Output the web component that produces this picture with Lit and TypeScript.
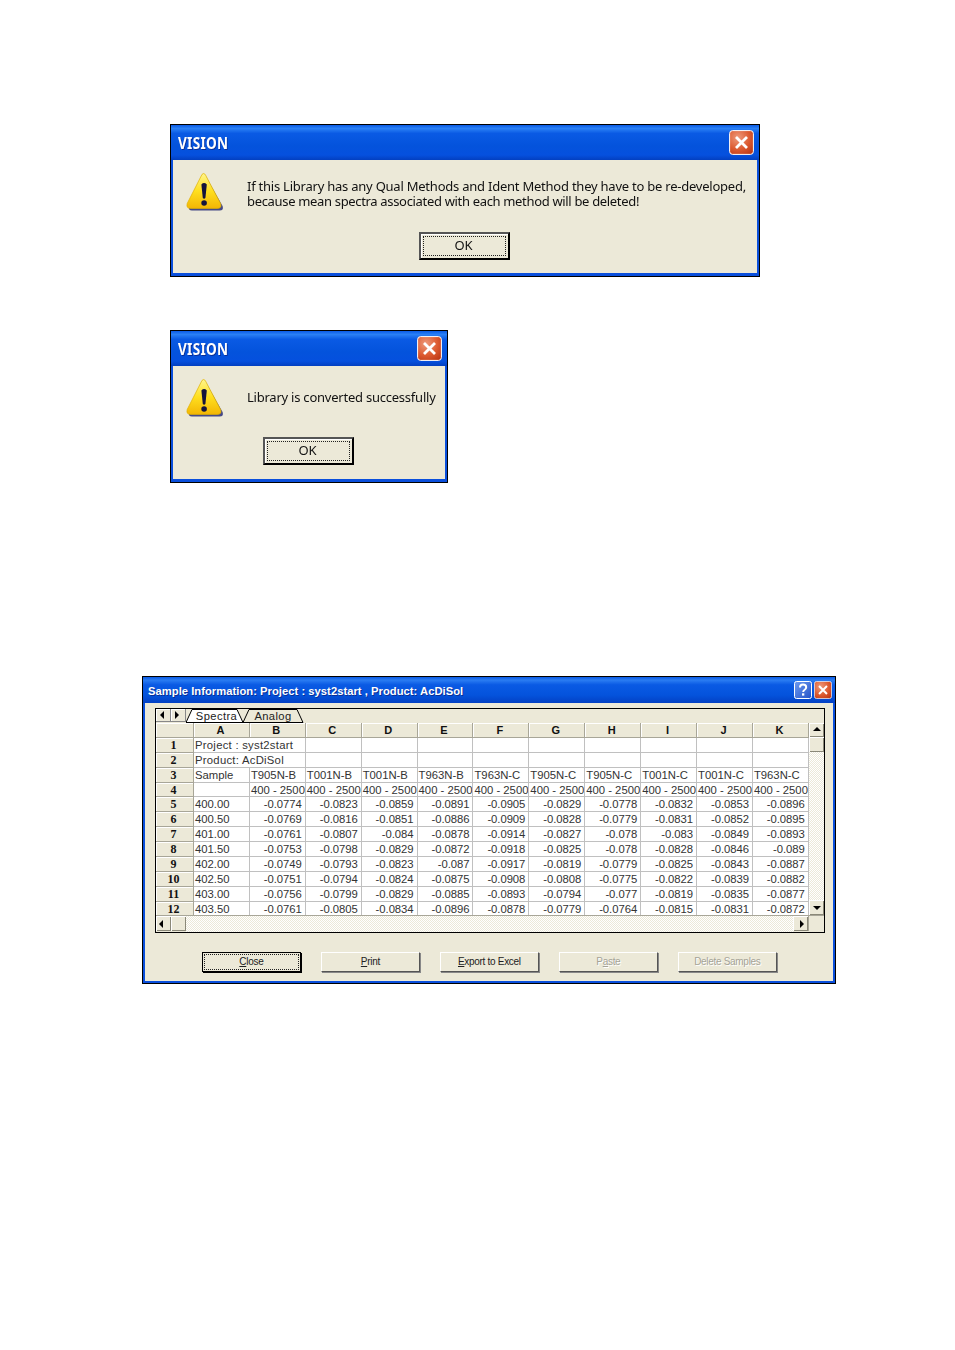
import { LitElement, html, css, svg } from "lit";
import { customElement } from "lit/decorators.js";

const warn = html`<svg class="warn" width="38" height="40" viewBox="0 0 38 40">
  <defs>
    <linearGradient id="wg" x1="0" y1="0" x2="0" y2="1"><stop offset="0" stop-color="#fff58c"/><stop offset=".5" stop-color="#ffdf1f"/><stop offset="1" stop-color="#f3b604"/></linearGradient>
  </defs>
  <path d="M19.5 4 L36.6 34 Q38 38.6 33.5 38.6 L6 38.6 Q2 38.6 3 34 Z" fill="#34387e" opacity=".9"/>
  <path d="M16 2.4 Q17.6 .6 19.2 2.4 L34.6 31.5 Q36 36.4 31.6 36.4 L4.4 36.4 Q0 36.4 1.2 31.5 Z" fill="url(#wg)" stroke="#e0b000" stroke-width=".7"/>
  <path d="M15.4 12.5 Q18 9.6 20.8 12.5 L19.4 26 Q18.1 27.6 16.8 26 Z" fill="#14143c"/>
  <circle cx="18.1" cy="31" r="2.8" fill="#14143c"/>
</svg>`;

const closeBtn = (cls: string) => html`<svg class=${cls} viewBox="0 0 25 25">
  <defs><radialGradient id="cg" cx=".35" cy=".3" r=".9"><stop offset="0" stop-color="#ee9a7c"/><stop offset=".55" stop-color="#dc5a30"/><stop offset="1" stop-color="#b93412"/></radialGradient></defs>
  <rect x=".6" y=".6" width="23.8" height="23.8" rx="3" fill="url(#cg)" stroke="#fff"/>
  <path d="M7 7 L18 18 M18 7 L7 18" stroke="#fff" stroke-width="2.8" fill="none"/>
</svg>`;

const helpBtn = html`<svg class="sm" viewBox="0 0 18 18">
  <defs><linearGradient id="hg" x1="0" y1="0" x2="1" y2="1"><stop offset="0" stop-color="#6f9cf0"/><stop offset="1" stop-color="#2352c8"/></linearGradient></defs>
  <rect x=".5" y=".5" width="17" height="17" rx="2" fill="url(#hg)" stroke="#fff"/>
  <path d="M6 6.5 Q6 3.6 9 3.6 Q12.2 3.6 12.2 6.3 Q12.2 8 10.4 9 Q9.2 9.7 9.2 11" fill="none" stroke="#fff" stroke-width="2"/>
  <rect x="8" y="12.3" width="2.3" height="2.3" fill="#fff"/>
</svg>`;

const arrow = (d: string) => {
  const pts: Record<string, string> = { l: "5,0 5,8 1,4", r: "1,0 1,8 5,4", u: "4,1 0,5 8,5", d: "0,1 8,1 4,5" };
  return html`<svg class="arr" width="8" height="8" viewBox="0 0 8 8">${svg`<polygon points=${pts[d]} fill="#000"/>`}</svg>`;
};

const COLS = ["A", "B", "C", "D", "E", "F", "G", "H", "I", "J", "K"];
const RANGE = "400 - 2500";
const IDS = ["T905N-B", "T001N-B", "T001N-B", "T963N-B", "T963N-C", "T905N-C", "T905N-C", "T001N-C", "T001N-C", "T963N-C"];
const DATA: string[][] = [
  ["400.00", "-0.0774", "-0.0823", "-0.0859", "-0.0891", "-0.0905", "-0.0829", "-0.0778", "-0.0832", "-0.0853", "-0.0896"],
  ["400.50", "-0.0769", "-0.0816", "-0.0851", "-0.0886", "-0.0909", "-0.0828", "-0.0779", "-0.0831", "-0.0852", "-0.0895"],
  ["401.00", "-0.0761", "-0.0807", "-0.084", "-0.0878", "-0.0914", "-0.0827", "-0.078", "-0.083", "-0.0849", "-0.0893"],
  ["401.50", "-0.0753", "-0.0798", "-0.0829", "-0.0872", "-0.0918", "-0.0825", "-0.078", "-0.0828", "-0.0846", "-0.089"],
  ["402.00", "-0.0749", "-0.0793", "-0.0823", "-0.087", "-0.0917", "-0.0819", "-0.0779", "-0.0825", "-0.0843", "-0.0887"],
  ["402.50", "-0.0751", "-0.0794", "-0.0824", "-0.0875", "-0.0908", "-0.0808", "-0.0775", "-0.0822", "-0.0839", "-0.0882"],
  ["403.00", "-0.0756", "-0.0799", "-0.0829", "-0.0885", "-0.0893", "-0.0794", "-0.077", "-0.0819", "-0.0835", "-0.0877"],
  ["403.50", "-0.0761", "-0.0805", "-0.0834", "-0.0896", "-0.0878", "-0.0779", "-0.0764", "-0.0815", "-0.0831", "-0.0872"],
];

@customElement("app-root")
export class AppRoot extends LitElement {
  static styles = css`
    :host { display: block; width: 955px; height: 1350px; background: #fff; font-family: "Liberation Sans", Arial, sans-serif; color: #000; overflow: hidden; }
    .page { display: flex; flex-direction: column; align-items: flex-start; padding: 124px 0 0 170px; }
    .win { box-sizing: border-box; border: 1px solid #000; background: #0a4fdc; padding: 0 2px 3px 2px; display: flex; flex-direction: column; }
    .title { margin: 0 -2px; display: flex; align-items: center; justify-content: space-between; color: #fff;
      background: linear-gradient(180deg, #0a5be6 0%, #2a80f5 10%, #0a5ae4 24%, #0453dc 60%, #0550de 86%, #033fc0 100%); }
    .d .title { height: 35px; padding: 0 5px 0 7px; }
    .d .title span { font: 700 16px "Noto Sans", sans-serif; letter-spacing: .3px; text-shadow: 1px 1px 0 #0a2f96; transform: scaleX(.85); transform-origin: left center; filter: blur(.3px); }
    .lg { width: 25px; height: 25px; display: block; }
    .sm { width: 18px; height: 18px; display: block; }
    .body { background: #ece9d8; flex: 1; position: relative; }
    .d { height: 153px; }
    .d1 { width: 590px; }
    .d2 { width: 278px; margin-top: 53px; }
    .msg { display: flex; align-items: flex-start; padding: 12px 0 0 13px; gap: 23px; height: 60px; box-sizing: border-box; }
    .msg p { margin: 0; font: 13px/15px "Noto Sans", sans-serif; letter-spacing: -.23px; white-space: nowrap; padding-top: 7px; color: #111; filter: blur(.3px); }
    .msg p .l2 { letter-spacing: -.33px; }
    .d2 .msg p { padding-top: 12px; }
    .warn { flex: none; margin-top: 0; }
    .actions { display: flex; }
    .d1 .actions { padding: 12px 0 0 246px; }
    .d2 .actions { padding: 11px 0 0 90px; }
    .ok { box-sizing: border-box; width: 91px; height: 28px; border: 2px solid #000; border-color: #555 #000 #000 #555; background: #ece9d8; padding: 2px; box-shadow: inset 1px 1px 0 #fff; }
    .ok div { box-sizing: border-box; height: 100%; border: 1px dotted #222; text-align: center; font: 13px/17px "Noto Sans", sans-serif; color: #111; padding-right: 2px; filter: blur(.2px); }

    .s { width: 694px; height: 308px; margin: 193px 0 0 -28px; padding: 0 2px 2px 2px; }
    .s .title { height: 26px; padding: 0 3px 0 5px; background: linear-gradient(180deg, #0a5be6 0%, #2a7cf2 12%, #0a5ae4 30%, #0453dc 70%, #0340c4 100%); }
    .s .title b { font: 700 11.2px "Liberation Sans", sans-serif; letter-spacing: .04px; text-shadow: 1px 1px 0 #0a2f96; white-space: nowrap; padding-top: 1px; }
    .ctl { display: flex; gap: 2px; }
    .sheet { position: absolute; left: 10px; top: 5px; width: 670px; height: 225px; box-sizing: border-box; border: 1px solid #000; background: #ece9d8; display: flex; flex-direction: column; overflow: hidden; }
    .tabs { height: 14px; display: flex; flex: none; }
    .nav { width: 15px; height: 13px; box-sizing: border-box; background: #ece9d8; border-right: 1px solid #888; border-bottom: 1px solid #888; box-shadow: inset 1px 1px 0 #fff; display: flex; align-items: center; justify-content: center; }
    .nav .arr { margin-left: -1px; }
    .tab { position: relative; font-size: 11.2px; line-height: 14px; letter-spacing: .4px; text-align: center; height: 14px; box-sizing: border-box; color: #222; }
    .tab.sp { padding-left: 4px; }
    .tab svg { position: absolute; inset: 0; }
    .tab span { position: relative; }
    .mid { display: flex; flex: 1; min-height: 0; }
    .grid { display: grid; grid-template-columns: 38px repeat(10, 55.9px) 55.9px; grid-auto-rows: 14.9px; width: 653px; flex: none; align-content: start; overflow: hidden; background: #fff; height: 193px; }
    .c { box-sizing: border-box; border-right: 1px solid #c0c0c0; border-bottom: 1px solid #c0c0c0; font-size: 11.3px; line-height: 14px; padding: 0 3px 0 1px; white-space: nowrap; overflow: hidden; color: #333; }
    .n { text-align: right; letter-spacing: -.05px; }
    .wide { letter-spacing: .26px; }
    .h { background: #ece9d8; text-align: center; font-weight: 700; font-size: 11px; color: #111; box-shadow: inset 1px 1px 0 #fff; border-color: #a8a698; padding: 0 3px 0 1px; }
    .rh { font-family: "Liberation Serif", serif; font-size: 12px; }
    .vs { flex: 1; display: flex; flex-direction: column; }
    .dither { background-color: #ece9d8; background-image: conic-gradient(#fff 25%, transparent 0 50%, #fff 0 75%, transparent 0); background-size: 2px 2px; }
    .sb { box-sizing: border-box; background: #ece9d8; box-shadow: inset 1px 1px 0 #fff, inset -1px -1px 0 #8a8878; display: flex; align-items: center; justify-content: center; flex: none; }
    .vs .sb { width: 15px; height: 14px; }
    .vs .thumb { height: 15px; }
    .vs .dither { flex: 1; }
    .vs .sb:last-child { height: 15px; padding-top: 3px; }
    .hs { height: 16px; flex: none; display: flex; border-top: 1px solid #a8a698; }
    .hs .sb { width: 15px; height: 15px; }
    .hs .dither { flex: 1; }
    .hs .sb:first-child .arr { margin-left: -4px; }
    .hs .sb:nth-last-child(2) .arr { margin-left: 5px; }
    .corner { width: 15px; height: 15px; background: #ece9d8; border-left: 1px solid #a8a698; flex: none; }
    .btns { position: absolute; left: 57px; top: 249px; display: flex; gap: 20.2px; }
    .btn { box-sizing: border-box; width: 98.8px; height: 20px; background: #ece9d8; border: 1px solid; border-color: #fff #555 #555 #fff; box-shadow: 1px 1px 0 #888; text-align: center; font-size: 10px; letter-spacing: -.3px; line-height: 17px; color: #222; white-space: nowrap; }
    .btn.def { border: 1px solid #000; padding: 1px; box-shadow: 1px 1px 0 #000; line-height: 13px; }
    .btn.def div { box-sizing: border-box; height: 100%; border: 1px dotted #222; }
    .btn.off { color: #a5a397; text-shadow: 1px 1px 0 #fff; }
    .btn u { text-underline-offset: 1px; }
  `;

  private dialog(cls: string, text: unknown) {
    return html`<section class="win d ${cls}">
      <header class="title"><span>VISION</span>${closeBtn("lg")}</header>
      <div class="body">
        <div class="msg">${warn}<p>${text}</p></div>
        <div class="actions"><div class="ok"><div>OK</div></div></div>
      </div>
    </section>`;
  }

  private tab(label: string, w: number, fill: string, cls = "") {
    return html`<div class="tab ${cls}" style="width:${w}px">
      <svg width=${w + 6} height="14" viewBox="0 0 ${w + 6} 14"><polygon points="0,13.5 6,0.5 ${w - 6},0.5 ${w},13.5" fill=${fill} stroke="#000"/></svg>
      <span>${label}</span>
    </div>`;
  }

  private cell(v: string, n = false) {
    return html`<div class="c ${n ? "n" : ""}">${v}</div>`;
  }

  private sheet() {
    return html`<div class="sheet">
      <div class="tabs">
        <div class="nav">${arrow("l")}</div><div class="nav">${arrow("r")}</div>
        ${this.tab("Spectra", 57, "#fff", "sp")}${this.tab("Analog", 60, "#ece9d8")}
      </div>
      <div class="mid">
        <div class="grid">
          <div class="c h"></div>
          ${COLS.map((c) => html`<div class="c h">${c}</div>`)}
          <div class="c h rh">1</div><div class="c wide" style="grid-column: span 2">Project : syst2start</div>${Array(9).fill(0).map(() => this.cell(""))}
          <div class="c h rh">2</div><div class="c wide" style="grid-column: span 2">Product: AcDiSol</div>${Array(9).fill(0).map(() => this.cell(""))}
          <div class="c h rh">3</div>${this.cell("Sample")}${IDS.map((v) => this.cell(v))}
          <div class="c h rh">4</div>${this.cell("")}${IDS.map(() => this.cell(RANGE))}
          ${DATA.map((r, i) => html`<div class="c h rh">${i + 5}</div>${this.cell(r[0])}${r.slice(1).map((v) => this.cell(v, true))}`)}
        </div>
        <div class="vs">
          <div class="sb">${arrow("u")}</div>
          <div class="sb thumb"></div>
          <div class="dither"></div>
          <div class="sb">${arrow("d")}</div>
        </div>
      </div>
      <div class="hs">
        <div class="sb">${arrow("l")}</div>
        <div class="sb"></div>
        <div class="dither"></div>
        <div class="sb">${arrow("r")}</div>
        <div class="corner"></div>
      </div>
    </div>`;
  }

  render() {
    return html`<div class="page">
      ${this.dialog("d1", html`If this Library has any Qual Methods and Ident Method they have to be re-developed,<br /><span class="l2">because mean spectra associated with each method will be deleted!</span>`)}
      ${this.dialog("d2", "Library is converted successfully")}
      <section class="win s">
        <header class="title"><b>Sample Information: Project : syst2start , Product: AcDiSol</b><div class="ctl">${helpBtn}${closeBtn("sm")}</div></header>
        <div class="body">
          ${this.sheet()}
          <div class="btns">
            <div class="btn def"><div><u>C</u>lose</div></div>
            <div class="btn"><u>P</u>rint</div>
            <div class="btn"><u>E</u>xport to Excel</div>
            <div class="btn off">P<u>a</u>ste</div>
            <div class="btn off">Delete Samples</div>
          </div>
        </div>
      </section>
    </div>`;
  }
}
